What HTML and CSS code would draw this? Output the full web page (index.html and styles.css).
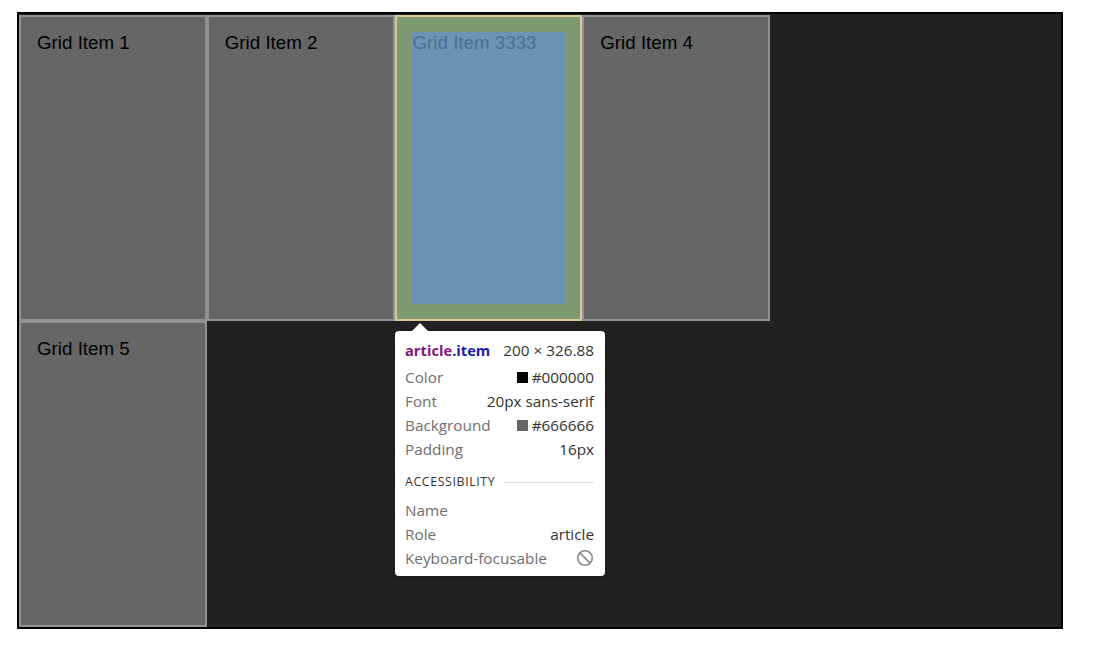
FILE: index.html
```html
<!DOCTYPE html>
<html>
<head>
<meta charset="utf-8">
<link rel="stylesheet" href="styles.css">
</head>
<body>
<main class="grid">
  <article class="item">Grid Item 1</article>
  <article class="item">Grid Item 2</article>
  <article class="item item-inspected">Grid Item 3333
    <div class="hl"><div class="hl-content"></div></div>
  </article>
  <article class="item">Grid Item 4</article>
  <article class="item">Grid Item 5</article>

  <div class="tooltip">
    <div class="tip-arrow"></div>
    <div class="tip-head">
      <span class="tip-sel"><span class="tag">article</span><span class="cls">.item</span></span>
      <span class="tip-size">200 × 326.88</span>
    </div>
    <div class="tip-row"><span class="lbl">Color</span><span class="val"><i class="sw sw-black"></i>#000000</span></div>
    <div class="tip-row"><span class="lbl">Font</span><span class="val">20px sans-serif</span></div>
    <div class="tip-row"><span class="lbl">Background</span><span class="val"><i class="sw sw-gray"></i>#666666</span></div>
    <div class="tip-row"><span class="lbl">Padding</span><span class="val">16px</span></div>
    <div class="tip-section"><span>ACCESSIBILITY</span><span class="rule"></span></div>
    <div class="tip-row"><span class="lbl">Name</span><span class="val"></span></div>
    <div class="tip-row"><span class="lbl">Role</span><span class="val">article</span></div>
    <div class="tip-row"><span class="lbl">Keyboard-focusable</span>
      <span class="val"><svg class="no-icon" width="18" height="18" viewBox="0 0 18 18"><circle cx="9" cy="9" r="7.3" fill="none" stroke="#8a8a8a" stroke-width="1.6"/><line x1="3.9" y1="3.9" x2="14.1" y2="14.1" stroke="#8a8a8a" stroke-width="1.6"/></svg></span>
    </div>
  </div>
</main>
</body>
</html>
```
FILE: styles.css
```css
html, body {
  margin: 0;
  background: #fff;
}
body {
  padding: 12px 0 0 17px;
}
.grid {
  position: relative;
  box-sizing: border-box;
  width: 1046px;
  border: 2px solid #000;
  padding-top: 1px;
  background: #222;
  display: grid;
  grid-template-columns: repeat(4, 187.75px);
  grid-template-rows: repeat(2, 306px);
}
.item {
  position: relative;
  box-sizing: border-box;
  background: #666;
  border: 2px solid #929292;
  padding: 15px 15px 15px 16px;
  font-family: "Liberation Sans", Arial, sans-serif;
  font-size: 18.75px;
  color: #000;
}
.hl {
  position: absolute;
  inset: -2px;
  border: 2px solid rgba(255, 229, 153, 0.66);
  box-shadow: inset 0 0 0 15px rgba(147, 196, 125, 0.55);
  padding: 15px;
}
.hl-content {
  width: 100%;
  height: 100%;
  background: rgba(111, 168, 220, 0.66);
}
.tooltip {
  position: absolute;
  left: 376px;
  top: 317px;
  width: 210px;
  box-sizing: border-box;
  padding: 7px 11px 6px 10px;
  background: #fff;
  border-radius: 4px;
  box-shadow: 0 1px 4px rgba(0, 0, 0, 0.35);
  font-family: "Open Sans", "Noto Sans", sans-serif;
  font-size: 15.3px;
  color: #333;
}
.tip-arrow {
  position: absolute;
  left: 17px;
  top: -8px;
  width: 0;
  height: 0;
  border-left: 8px solid transparent;
  border-right: 8px solid transparent;
  border-bottom: 8px solid #fff;
}
.tip-head {
  display: flex;
  justify-content: space-between;
  align-items: center;
  line-height: 24px;
  margin-bottom: 3px;
}
.tip-sel {
  font-weight: 700;
  font-size: 14.7px;
}
.tag { color: #881280; }
.cls { color: #1a1aa6; }
.tip-size { color: #333; }
.tip-row {
  display: flex;
  justify-content: space-between;
  align-items: center;
  line-height: 24px;
  height: 24px;
}
.lbl { color: #6e6e6e; }
.val {
  display: flex;
  align-items: center;
  color: #333;
}
.sw {
  display: inline-block;
  width: 11px;
  height: 11px;
  margin-right: 4px;
}
.sw-black { background: #000; }
.sw-gray { background: #666; }
.tip-section {
  display: flex;
  align-items: center;
  gap: 9px;
  margin-top: 13px;
  margin-bottom: 8px;
  line-height: 16px;
  font-size: 12.4px;
  letter-spacing: 0.6px;
  color: #333;
}
.rule {
  flex: 1;
  height: 1px;
  background: #ddd;
}
.no-icon {
  display: block;
}
```
